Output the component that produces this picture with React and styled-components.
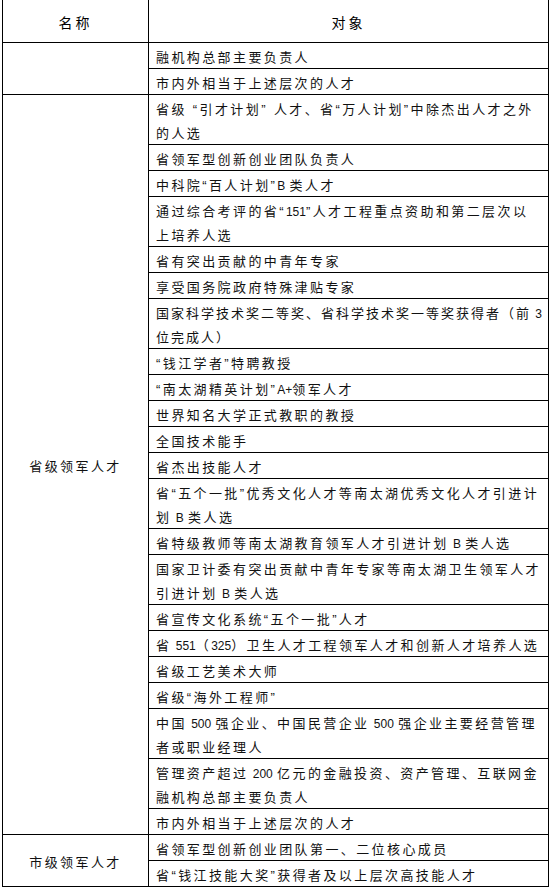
import React from 'react'
import styled, { createGlobalStyle } from 'styled-components'

const GlobalStyle = createGlobalStyle`
  * {
    box-sizing: border-box;
  }
  html,
  body {
    margin: 0;
    padding: 0;
    background: #fff;
  }
  body {
    font-family: "Liberation Sans", "Noto Sans CJK SC", sans-serif;
    color: #111;
  }
`

const Table = styled.table`
  width: 547px;
  margin-left: 2px;
  border-collapse: separate;
  border-spacing: 0;
  table-layout: fixed;
  border-left: 1px solid #000;
  border-right: 1px solid #000;
`

const HeadCell = styled.th`
  width: ${p => p.$width || 'auto'};
  height: 43px;
  padding: 5px 0 0;
  line-height: 37px;
  font-size: 14px;
  font-weight: normal;
  letter-spacing: 3px;
  color: #000;
  text-align: center;
  vertical-align: top;
  border-bottom: 1px solid #000;
  border-right: ${p => (p.$divider ? '1px solid #000' : 'none')};
`

const NameCell = styled.td`
  padding: 4px 0 0;
  font-size: 13px;
  line-height: 24px;
  letter-spacing: 2.4px;
  text-align: center;
  vertical-align: middle;
  border-right: 1px solid #000;
  border-bottom: 1px solid #000;
`

const ItemCell = styled.td`
  padding: 3px 4px 0 7px;
  font-size: 13px;
  line-height: 24px;
  letter-spacing: ${p => (p.$tight ? '2px' : '2.4px')};
  white-space: nowrap;
  vertical-align: top;
  border-bottom: 1px solid #000;
`

const Lines = styled.div`
  margin-bottom: -2px;
`

const Latin = styled.span`
  font-size: 12px;
  line-height: 12px;
  letter-spacing: 0;
  word-spacing: 1px;
`

const groups = [
  {
    name: '',
    items: [['融机构总部主要负责人'], ['市内外相当于上述层次的人才']],
  },
  {
    name: '省级领军人才',
    items: [
      ['省级 “引才计划” 人才、省“万人计划”中除杰出人才之外', '的人选'],
      ['省领军型创新创业团队负责人'],
      ['中科院“百人计划”B 类人才'],
      ['通过综合考评的省“151”人才工程重点资助和第二层次以', '上培养人选'],
      ['省有突出贡献的中青年专家'],
      ['享受国务院政府特殊津贴专家'],
      {
        tight: true,
        lines: ['国家科学技术奖二等奖、省科学技术奖一等奖获得者（前 3', '位完成人）'],
      },
      ['“钱江学者”特聘教授'],
      ['“南太湖精英计划”A+领军人才'],
      ['世界知名大学正式教职的教授'],
      ['全国技术能手'],
      ['省杰出技能人才'],
      ['省“五个一批”优秀文化人才等南太湖优秀文化人才引进计', '划 B 类人选'],
      ['省特级教师等南太湖教育领军人才引进计划 B 类人选'],
      ['国家卫计委有突出贡献中青年专家等南太湖卫生领军人才', '引进计划 B 类人选'],
      ['省宣传文化系统“五个一批”人才'],
      ['省 551（325）卫生人才工程领军人才和创新人才培养人选'],
      ['省级工艺美术大师'],
      ['省级“海外工程师”'],
      ['中国 500 强企业、中国民营企业 500 强企业主要经营管理', '者或职业经理人'],
      ['管理资产超过 200 亿元的金融投资、资产管理、互联网金', '融机构总部主要负责人'],
      ['市内外相当于上述层次的人才'],
    ],
  },
  {
    name: '市级领军人才',
    items: [['省领军型创新创业团队第一、二位核心成员'], ['省“钱江技能大奖”获得者及以上层次高技能人才']],
  },
]

// latin letters and digits keep their own narrow spacing
const renderText = text =>
  text
    .split(/( ?[A-Za-z0-9+]+ ?)/)
    .map((part, i) => (i % 2 ? <Latin key={i}>{part}</Latin> : part))

const App = () => (
  <>
    <GlobalStyle />
    <Table>
      <thead>
        <tr>
          <HeadCell $width="146px" $divider>
            名称
          </HeadCell>
          <HeadCell>对象</HeadCell>
        </tr>
      </thead>
      <tbody>
        {groups.map((group, g) =>
          group.items.map((item, i) => {
            const lines = Array.isArray(item) ? item : item.lines
            return (
              <tr key={`${g}-${i}`}>
                {i === 0 && <NameCell rowSpan={group.items.length}>{group.name}</NameCell>}
                <ItemCell $tight={item.tight}>
                  <Lines>
                    {lines.map((line, l) => (
                      <div key={l}>{renderText(line)}</div>
                    ))}
                  </Lines>
                </ItemCell>
              </tr>
            )
          })
        )}
      </tbody>
    </Table>
  </>
)

export default App
